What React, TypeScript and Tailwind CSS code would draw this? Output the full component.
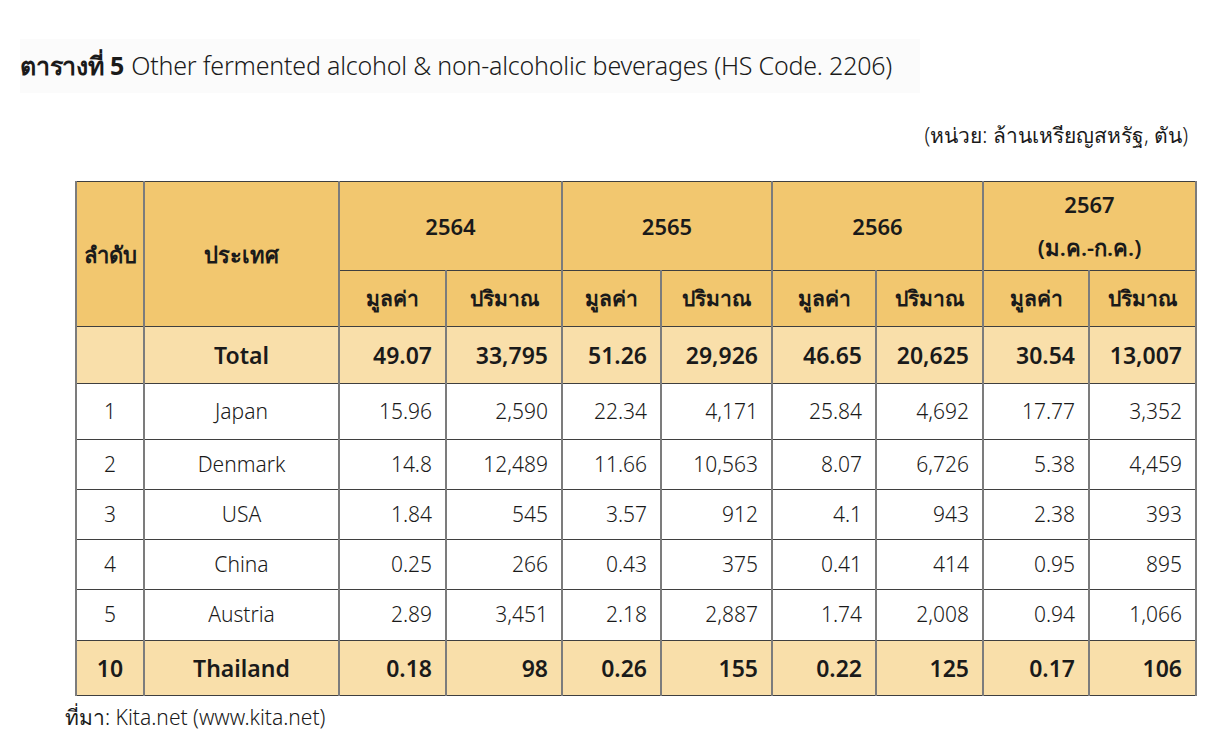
import React from "react";

const rows = [
  { r: "1", c: "Japan", v: ["15.96", "2,590", "22.34", "4,171", "25.84", "4,692", "17.77", "3,352"] },
  { r: "2", c: "Denmark", v: ["14.8", "12,489", "11.66", "10,563", "8.07", "6,726", "5.38", "4,459"] },
  { r: "3", c: "USA", v: ["1.84", "545", "3.57", "912", "4.1", "943", "2.38", "393"] },
  { r: "4", c: "China", v: ["0.25", "266", "0.43", "375", "0.41", "414", "0.95", "895"] },
  { r: "5", c: "Austria", v: ["2.89", "3,451", "2.18", "2,887", "1.74", "2,008", "0.94", "1,066"] },
];
const heights = ["h-[56px]", "h-[50px]", "h-[50px]", "h-[50px]", "h-[51px]"];

const cell = "border-x-2 border-x-[#7c7c7c] border-y border-y-[#3f3f3f]";

export default function App() {
  return (
    <div
      className="w-[1229px] h-[746px] bg-white text-[#1a1a1a] flex flex-col"
      style={{ fontFamily: '"Noto Sans", "Open Sans", sans-serif' }}
    >
      <div className="pt-[39px] pl-[20px]">
        <div className="h-[54px] w-[900px] bg-[#fbfbfb] flex items-center text-[25px] font-light tracking-[-0.2px]">
          <span className="font-bold mr-[7px]">ตารางที่ 5</span>
          <span>Other fermented alcohol &amp; non-alcoholic beverages (HS Code. 2206)</span>
        </div>
      </div>
      <div className="mt-[27px] pr-[41px] flex justify-end text-[21px] font-light leading-[30px]">
        (หน่วย: ล้านเหรียญสหรัฐ, ตัน)
      </div>
      <div className="mt-[31px] pl-[75px]">
        <table className="table-fixed border-collapse w-[1120px] text-[21px]">
          <colgroup>
            <col className="w-[68px]" />
            <col className="w-[195px]" />
            <col className="w-[107px]" />
            <col className="w-[116px]" />
            <col className="w-[99px]" />
            <col className="w-[111px]" />
            <col className="w-[104px]" />
            <col className="w-[107px]" />
            <col className="w-[106px]" />
            <col className="w-[107px]" />
          </colgroup>
          <thead>
            <tr className="h-[89px] bg-[#f2c76f] text-[22px]">
              <th rowSpan={2} className={`${cell} font-semibold`}>ลำดับ</th>
              <th rowSpan={2} className={`${cell} font-semibold`}>ประเทศ</th>
              <th colSpan={2} className={`${cell} font-semibold`}>2564</th>
              <th colSpan={2} className={`${cell} font-semibold`}>2565</th>
              <th colSpan={2} className={`${cell} font-semibold`}>2566</th>
              <th colSpan={2} className={`${cell} font-semibold leading-[43px]`}>
                <div>2567</div>
                <div>(ม.ค.-ก.ค.)</div>
              </th>
            </tr>
            <tr className="h-[56px] bg-[#f2c76f]">
              {["มูลค่า", "ปริมาณ", "มูลค่า", "ปริมาณ", "มูลค่า", "ปริมาณ", "มูลค่า", "ปริมาณ"].map((t, i) => (
                <th key={i} className={`${cell} font-semibold`}>{t}</th>
              ))}
            </tr>
          </thead>
          <tbody>
            <tr className="h-[57px] bg-[#f9dfaa] font-semibold text-[23px]">
              <td className={cell}></td>
              <td className={`${cell} text-center`}>Total</td>
              {["49.07", "33,795", "51.26", "29,926", "46.65", "20,625", "30.54", "13,007"].map((t, i) => (
                <td key={i} className={`${cell} text-right pr-[13px]`}>{t}</td>
              ))}
            </tr>
            {rows.map((row, idx) => (
              <tr key={row.r} className={`${heights[idx]} font-light`}>
                <td className={`${cell} text-center`}>{row.r}</td>
                <td className={`${cell} text-center`}>{row.c}</td>
                {row.v.map((t, i) => (
                  <td key={i} className={`${cell} text-right pr-[13px]`}>{t}</td>
                ))}
              </tr>
            ))}
            <tr className="h-[55px] bg-[#f9dfaa] font-semibold text-[23px]">
              <td className={`${cell} text-center`}>10</td>
              <td className={`${cell} text-center`}>Thailand</td>
              {["0.18", "98", "0.26", "155", "0.22", "125", "0.17", "106"].map((t, i) => (
                <td key={i} className={`${cell} text-right pr-[13px]`}>{t}</td>
              ))}
            </tr>
          </tbody>
        </table>
      </div>
      <div className="pl-[65px] mt-[7px] text-[21px] font-light leading-[28px]">
        ที่มา: Kita.net (www.kita.net)
      </div>
    </div>
  );
}
